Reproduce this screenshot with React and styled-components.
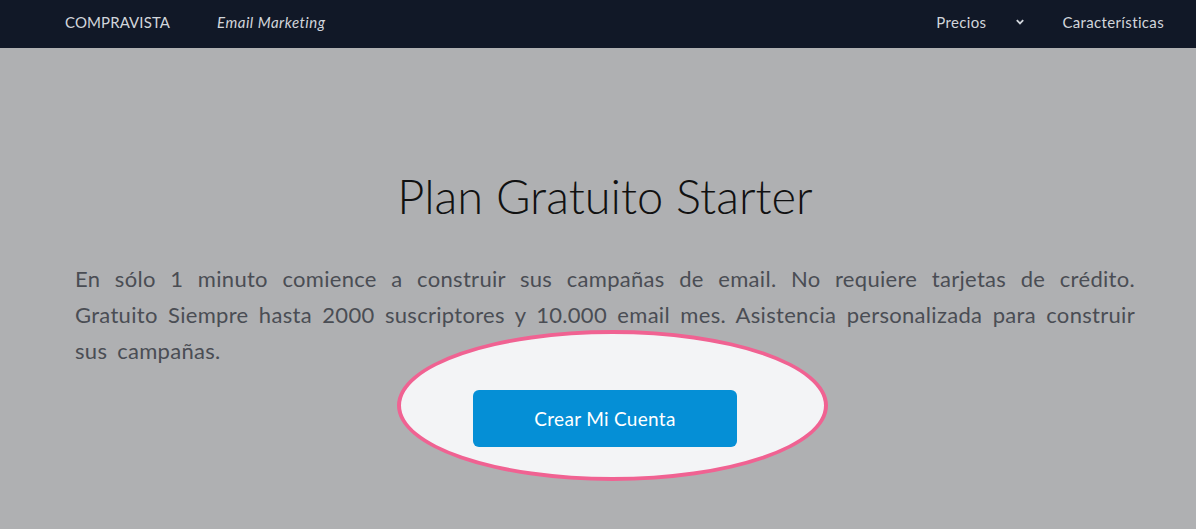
import React from "react";
import styled, { createGlobalStyle } from "styled-components";

const Global = createGlobalStyle`
  html, body { margin: 0; padding: 0; }
  body { background: #afb0b2; font-family: "Lato", "Open Sans", sans-serif; }
`;

const Nav = styled.nav`
  height: 48px;
  box-sizing: border-box;
  padding: 0 32px 5px 65px;
  background: #111827;
  display: flex;
  align-items: center;
  justify-content: space-between;
  color: #d1d5db;
  font-size: 15px;
`;

const NavGroup = styled.div`
  display: flex;
  align-items: center;
  gap: ${(p) => p.$gap || 0}px;
`;

const Brand = styled.span`
  letter-spacing: 0.1px;
`;

const Tagline = styled.span`
  font-style: italic;
  letter-spacing: 0.5px;
`;

const NavLink = styled.span`
  display: flex;
  align-items: center;
  letter-spacing: 0.35px;
`;

const Chevron = styled.svg`
  display: block;
  margin: 0 6px 0 -2px;
`;

const Main = styled.main`
  padding: 120px 61px 80px 75px;
  display: flex;
  flex-direction: column;
  align-items: center;
`;

const Title = styled.h1`
  margin: 0;
  font-size: 47px;
  font-weight: 300;
  color: #111;
  line-height: 1.2;
`;

const Lead = styled.p`
  margin: 37px 0 0;
  align-self: stretch;
  font-size: 22px;
  line-height: 36px;
  letter-spacing: 0.3px;
  word-spacing: 4px;
  color: #4a4d54;
  text-align: justify;
`;

const CtaWrap = styled.div`
  position: relative;
  margin-top: 21px;
  z-index: 0;
`;

const Highlight = styled.div`
  position: absolute;
  left: -76px;
  top: -60px;
  width: 431px;
  height: 151px;
  box-sizing: border-box;
  border: 4px solid #f06292;
  border-radius: 50%;
  background: #f3f4f6;
  z-index: -1;
`;

const Button = styled.button`
  display: block;
  width: 264px;
  height: 57px;
  padding: 0;
  border: none;
  border-radius: 6px;
  background: #058fd6;
  color: #fff;
  font-family: inherit;
  font-size: 19px;
  letter-spacing: 0.3px;
  cursor: pointer;
`;

export default function App() {
  return (
    <>
      <Global />
      <Nav>
        <NavGroup $gap={47}>
          <Brand>COMPRAVISTA</Brand>
          <Tagline>Email Marketing</Tagline>
        </NavGroup>
        <NavGroup $gap={31}>
          <NavLink>Precios</NavLink>
          <NavLink>
            <Chevron width="10" height="8" viewBox="0 0 10 8">
              <path d="M1.8 2.2 L5 5.4 L8.2 2.2" fill="none" stroke="#d1d5db" strokeWidth="1.8" />
            </Chevron>
          </NavLink>
          <NavLink>Características</NavLink>
        </NavGroup>
      </Nav>
      <Main>
        <Title>Plan Gratuito Starter</Title>
        <Lead>
          En sólo 1 minuto comience a construir sus campañas de email. No requiere tarjetas de crédito.
          Gratuito Siempre hasta 2000 suscriptores y 10.000 email mes. Asistencia personalizada para
          construir sus campañas.
        </Lead>
        <CtaWrap>
          <Highlight />
          <Button>Crear Mi Cuenta</Button>
        </CtaWrap>
      </Main>
    </>
  );
}
